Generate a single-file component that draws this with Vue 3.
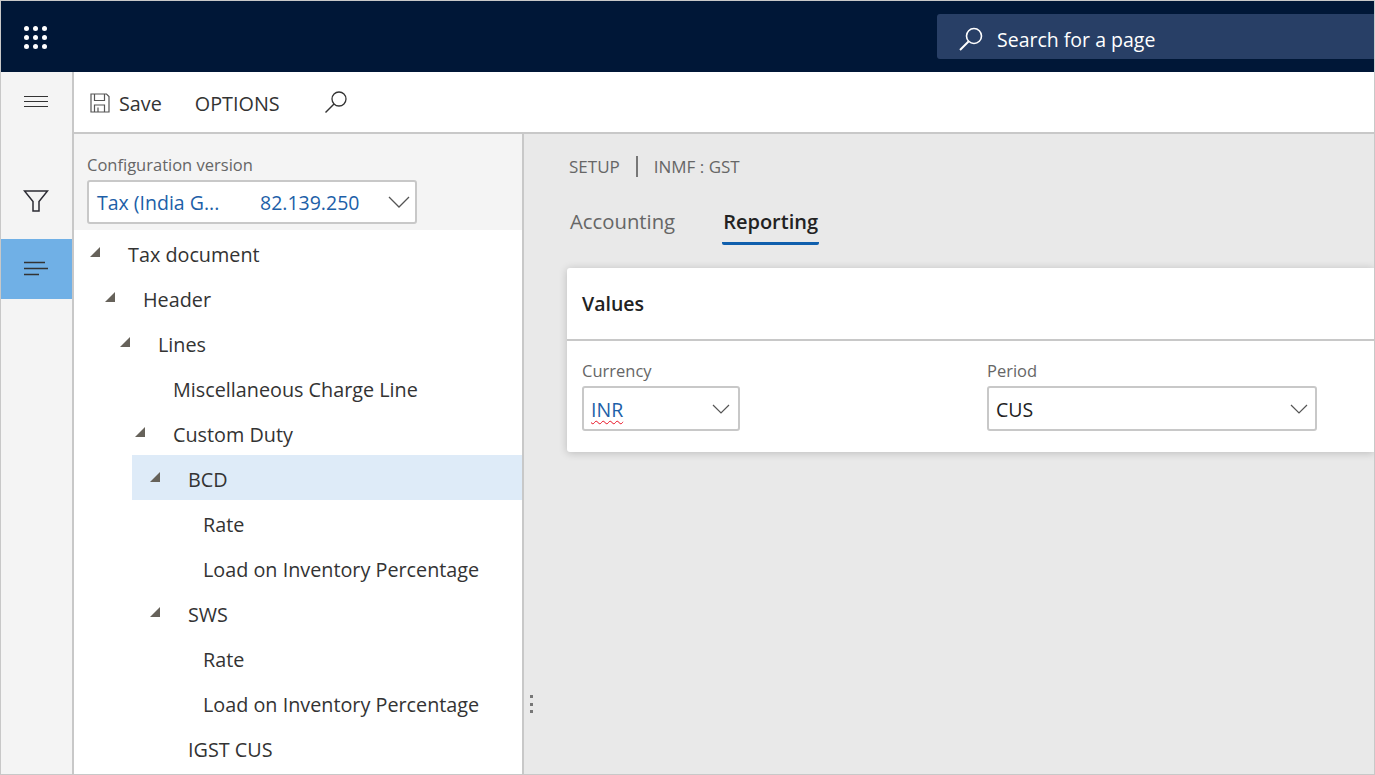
<template>
  <div class="app">
    <header class="topbar">
      <button class="waffle" aria-label="Apps">
        <span v-for="n in 9" :key="n" class="dot"></span>
      </button>
      <div class="search">
        <svg class="search-icon" width="26" height="26" viewBox="0 0 26 26" fill="none" stroke="#fff">
          <circle cx="16" cy="10" r="7.500" stroke-width="1.600" />
          <path d="M10.500 15.500 2 24" stroke-width="2" />
        </svg>
        <span>Search for a page</span>
      </div>
    </header>

    <div class="body">
      <nav class="rail">
        <button class="rail-btn menu" aria-label="Menu">
          <svg width="26" height="14" viewBox="0 0 26 14" stroke="#333" fill="none">
            <path d="M1 1.500h24M1 6.500h24M1 11.500h24" />
          </svg>
        </button>
        <button class="rail-btn filter" aria-label="Filter">
          <svg width="26" height="24" viewBox="0 0 26 24" fill="none" stroke="#2b2b33" stroke-width="1.500">
            <path d="M1.500 2h23L16 12.500V22h-6v-9.500z" />
          </svg>
        </button>
        <button class="rail-btn list" aria-label="List">
          <svg width="26" height="16" viewBox="0 0 26 16" fill="none" stroke="#333" stroke-width="1.300">
            <path d="M1 1.500h21M1 7.500h24M1 13.500h15" />
          </svg>
        </button>
      </nav>

      <div class="content">
        <div class="toolbar">
          <button class="tool save">
            <svg width="20" height="20" viewBox="0 0 20 20" fill="none" stroke="#555" stroke-width="1.200">
              <path d="M1 1h15.500L19 3.500V19H1z" />
              <path d="M4.500 1v6.500h10V1" />
              <path d="M4.500 19v-7h10v7M8 14.500v4.500" />
            </svg>
            <span>Save</span>
          </button>
          <button class="tool">OPTIONS</button>
          <button class="tool find" aria-label="Find">
            <svg width="24" height="24" viewBox="0 0 24 24" fill="none" stroke="#333">
              <circle cx="15" cy="9" r="7" stroke-width="1.300" />
              <path d="M10 14 1.500 22.500" stroke-width="1.500" />
            </svg>
          </button>
        </div>

        <div class="split">
          <aside class="tree-panel">
            <div class="version">
              <label class="field-label">Configuration version</label>
              <div class="select version-select">
                <span class="link-text ver-name">Tax (India G...</span>
                <span class="link-text">82.139.250</span>
                <svg class="chev" width="22" height="12" viewBox="0 0 22 12" fill="none" stroke="#555" stroke-width="1.300">
                  <path d="M1 1l10 10L21 1" />
                </svg>
              </div>
            </div>
            <ul class="tree">
              <li
                v-for="row in rows"
                :key="row.id"
                class="tree-row"
                :class="{ selected: row.selected }"
                :style="{ marginLeft: (row.level * 15 - 2) + 'px' }"
              >
                <span class="caret-slot"><i v-if="row.open" class="caret"></i></span>
                <span class="row-label">{{ row.label }}</span>
              </li>
            </ul>
          </aside>

          <main class="detail">
            <div class="grip"><i></i><i></i><i></i></div>
            <div class="crumbs">
              <span>SETUP</span>
              <span class="crumb-sep"></span>
              <span>INMF : GST</span>
            </div>
            <div class="tabs">
              <span class="tab">Accounting</span>
              <span class="tab active">Reporting</span>
            </div>
            <section class="card">
              <h2 class="card-title">Values</h2>
              <div class="card-fields">
                <div class="field currency">
                  <label class="field-label">Currency</label>
                  <div class="select">
                    <span class="link-text inr">INR</span>
                    <svg class="chev" width="18" height="10" viewBox="0 0 18 10" fill="none" stroke="#555" stroke-width="1.200">
                      <path d="M1 1l8 8 8-8" />
                    </svg>
                  </div>
                </div>
                <div class="field period">
                  <label class="field-label">Period</label>
                  <div class="select">
                    <span>CUS</span>
                    <svg class="chev" width="18" height="10" viewBox="0 0 18 10" fill="none" stroke="#555" stroke-width="1.200">
                      <path d="M1 1l8 8 8-8" />
                    </svg>
                  </div>
                </div>
              </div>
            </section>
          </main>
        </div>
      </div>
    </div>
  </div>
</template>

<script setup>
const rows = [
  { id: 1, level: 0, label: 'Tax document', open: true },
  { id: 2, level: 1, label: 'Header', open: true },
  { id: 3, level: 2, label: 'Lines', open: true },
  { id: 4, level: 3, label: 'Miscellaneous Charge Line' },
  { id: 5, level: 3, label: 'Custom Duty', open: true },
  { id: 6, level: 4, label: 'BCD', open: true, selected: true },
  { id: 7, level: 5, label: 'Rate' },
  { id: 8, level: 5, label: 'Load on Inventory Percentage' },
  { id: 9, level: 4, label: 'SWS', open: true },
  { id: 10, level: 5, label: 'Rate' },
  { id: 11, level: 5, label: 'Load on Inventory Percentage' },
  { id: 12, level: 4, label: 'IGST CUS' }
]
</script>

<style>
html, body { margin: 0; height: 100%; overflow: hidden; background: #fff; }
</style>

<style scoped>
.app {
  width: 1375px;
  height: 775px;
  box-sizing: border-box;
  border: 1px solid #c8c8c8;
  display: flex;
  flex-direction: column;
  overflow: hidden;
  font-family: "Open Sans", "Noto Sans", sans-serif;
  color: #333;
}
button { background: none; border: 0; padding: 0; font: inherit; color: inherit; }
ul { list-style: none; margin: 0; padding: 0; }

.topbar {
  height: 71px;
  flex: none;
  background: #001737;
  display: flex;
  align-items: center;
  justify-content: space-between;
}
.waffle {
  width: 24px;
  margin-left: 23px;
  display: grid;
  grid-template-columns: repeat(3, 5px);
  gap: 4px;
  margin-top: 2px;
}
.dot { width: 5px; height: 5px; border-radius: 50%; background: #fff; }
.search {
  width: 437px;
  height: 45px;
  background: #283f66;
  border-radius: 3px 0 0 3px;
  display: flex;
  align-items: center;
  color: #fff;
  font-size: 19.500px;
  box-sizing: border-box;
  padding: 5px 0 0 21px;
}
.search-icon { margin-right: 13px; }

.body { flex: 1; display: flex; min-height: 0; }

.rail {
  width: 71px;
  flex: none;
  background: #f4f4f4;
  border-right: 2px solid #c8c8c8;
  display: flex;
  flex-direction: column;
}
.rail-btn { display: flex; align-items: center; justify-content: center; width: 71px; box-sizing: border-box; }
.rail-btn.menu { height: 60px; padding-right: 2px; }
.rail-btn.filter { height: 107px; padding: 31px 2px 0 0; }
.rail-btn.list { height: 60px; background: #70b0e6; padding-right: 2px; }

.content { flex: 1; min-width: 0; display: flex; flex-direction: column; }

.toolbar {
  height: 62px;
  flex: none;
  box-sizing: border-box;
  border-bottom: 2px solid #c8c8c8;
  display: flex;
  align-items: center;
  padding: 2px 0 0 16px;
  background: #fff;
}
.tool { display: flex; align-items: center; font-size: 19.800px; color: #333; }
.save { margin-right: 33px; gap: 9px; }
.find { margin: -2px 0 0 44px; }

.split { flex: 1; display: flex; min-height: 0; }

.tree-panel {
  width: 450px;
  flex: none;
  box-sizing: border-box;
  border-right: 2px solid #c8c8c8;
  overflow: hidden;
}
.version {
  height: 96px;
  box-sizing: border-box;
  background: #f4f4f4;
  padding: 19px 0 0 13px;
}
.field-label {
  display: block;
  font-size: 16.500px;
  line-height: 24px;
  margin-bottom: 3px;
  color: #666;
}
.select {
  height: 45px;
  box-sizing: border-box;
  border: 2px solid #c8c8c8;
  border-radius: 3px;
  background: #fff;
  display: flex;
  align-items: center;
  padding: 2px 0 0 7px;
  font-size: 19.500px;
  color: #222;
  position: relative;
}
.chev { position: absolute; right: 7px; top: 50%; margin-top: -5px; }
.currency .chev { right: 8px; }
.link-text { color: #1d5fa8; }
.version-select { width: 330px; height: 44px; padding: 0 0 0 8px; }
.ver-name { width: 163px; flex: none; }
.version-select .chev { right: 5px; margin-top: -6px; }

.tree-row {
  height: 45px;
  display: flex;
  align-items: center;
  font-size: 19.800px;
  color: #333;
}
.tree-row.selected { background: #deebf8; }
.row-label { padding-top: 4px; }
.caret-slot { width: 56px; flex: none; position: relative; height: 100%; }
.caret {
  position: absolute;
  left: 18px;
  top: 17px;
  width: 0;
  height: 0;
  border-style: solid;
  border-width: 0 0 10px 10px;
  border-color: transparent transparent #66625a transparent;
}

.detail {
  flex: 1;
  min-width: 0;
  background: #e9e9e9;
  padding: 20px 0 0 43px;
  position: relative;
}
.grip {
  position: absolute;
  left: 6px;
  top: 561px;
  display: flex;
  flex-direction: column;
  gap: 4.500px;
}
.grip i { display: block; width: 2.500px; height: 3px; background: #777; }
.crumbs {
  display: flex;
  align-items: center;
  box-sizing: border-box;
  font-size: 17px;
  color: #666;
  height: 26px;
  padding: 0 0 2px 2px;
}
.crumb-sep { width: 2px; height: 21px; background: #777; margin: 0 16px 0 16px; }
.tabs {
  display: flex;
  margin-top: 25px;
  height: 45px;
  padding-left: 3px;
}
.tab {
  font-size: 20.300px;
  line-height: 33px;
  color: #666;
  margin-right: 47px;
  box-sizing: border-box;
}
.tab.active {
  color: #222;
  font-weight: 600;
  font-size: 20px;
  line-height: 34px;
  height: 40px;
  padding: 0 1px;
  border-bottom: 3px solid #0f5fad;
  border-radius: 0 0 2px 2px;
}
.card {
  background: #fff;
  margin-top: 18px;
  height: 184px;
  border-radius: 3px 0 0 3px;
  box-shadow: 0 1px 9px rgba(0, 0, 0, 0.2);
}
.card-title {
  margin: 0;
  height: 73px;
  box-sizing: border-box;
  border-bottom: 2px solid #c8c8c8;
  padding-left: 15px;
  display: flex;
  align-items: center;
  font-size: 19.500px;
  font-weight: 600;
  color: #222;
}
.card-fields { display: flex; padding: 18px 0 0 15px; }
.currency { width: 405px; }
.currency .select { width: 158px; }
.period .select { width: 330px; }
.inr {
  text-decoration: underline wavy #e81123 1.300px;
  text-underline-offset: 3px;
}
</style>
